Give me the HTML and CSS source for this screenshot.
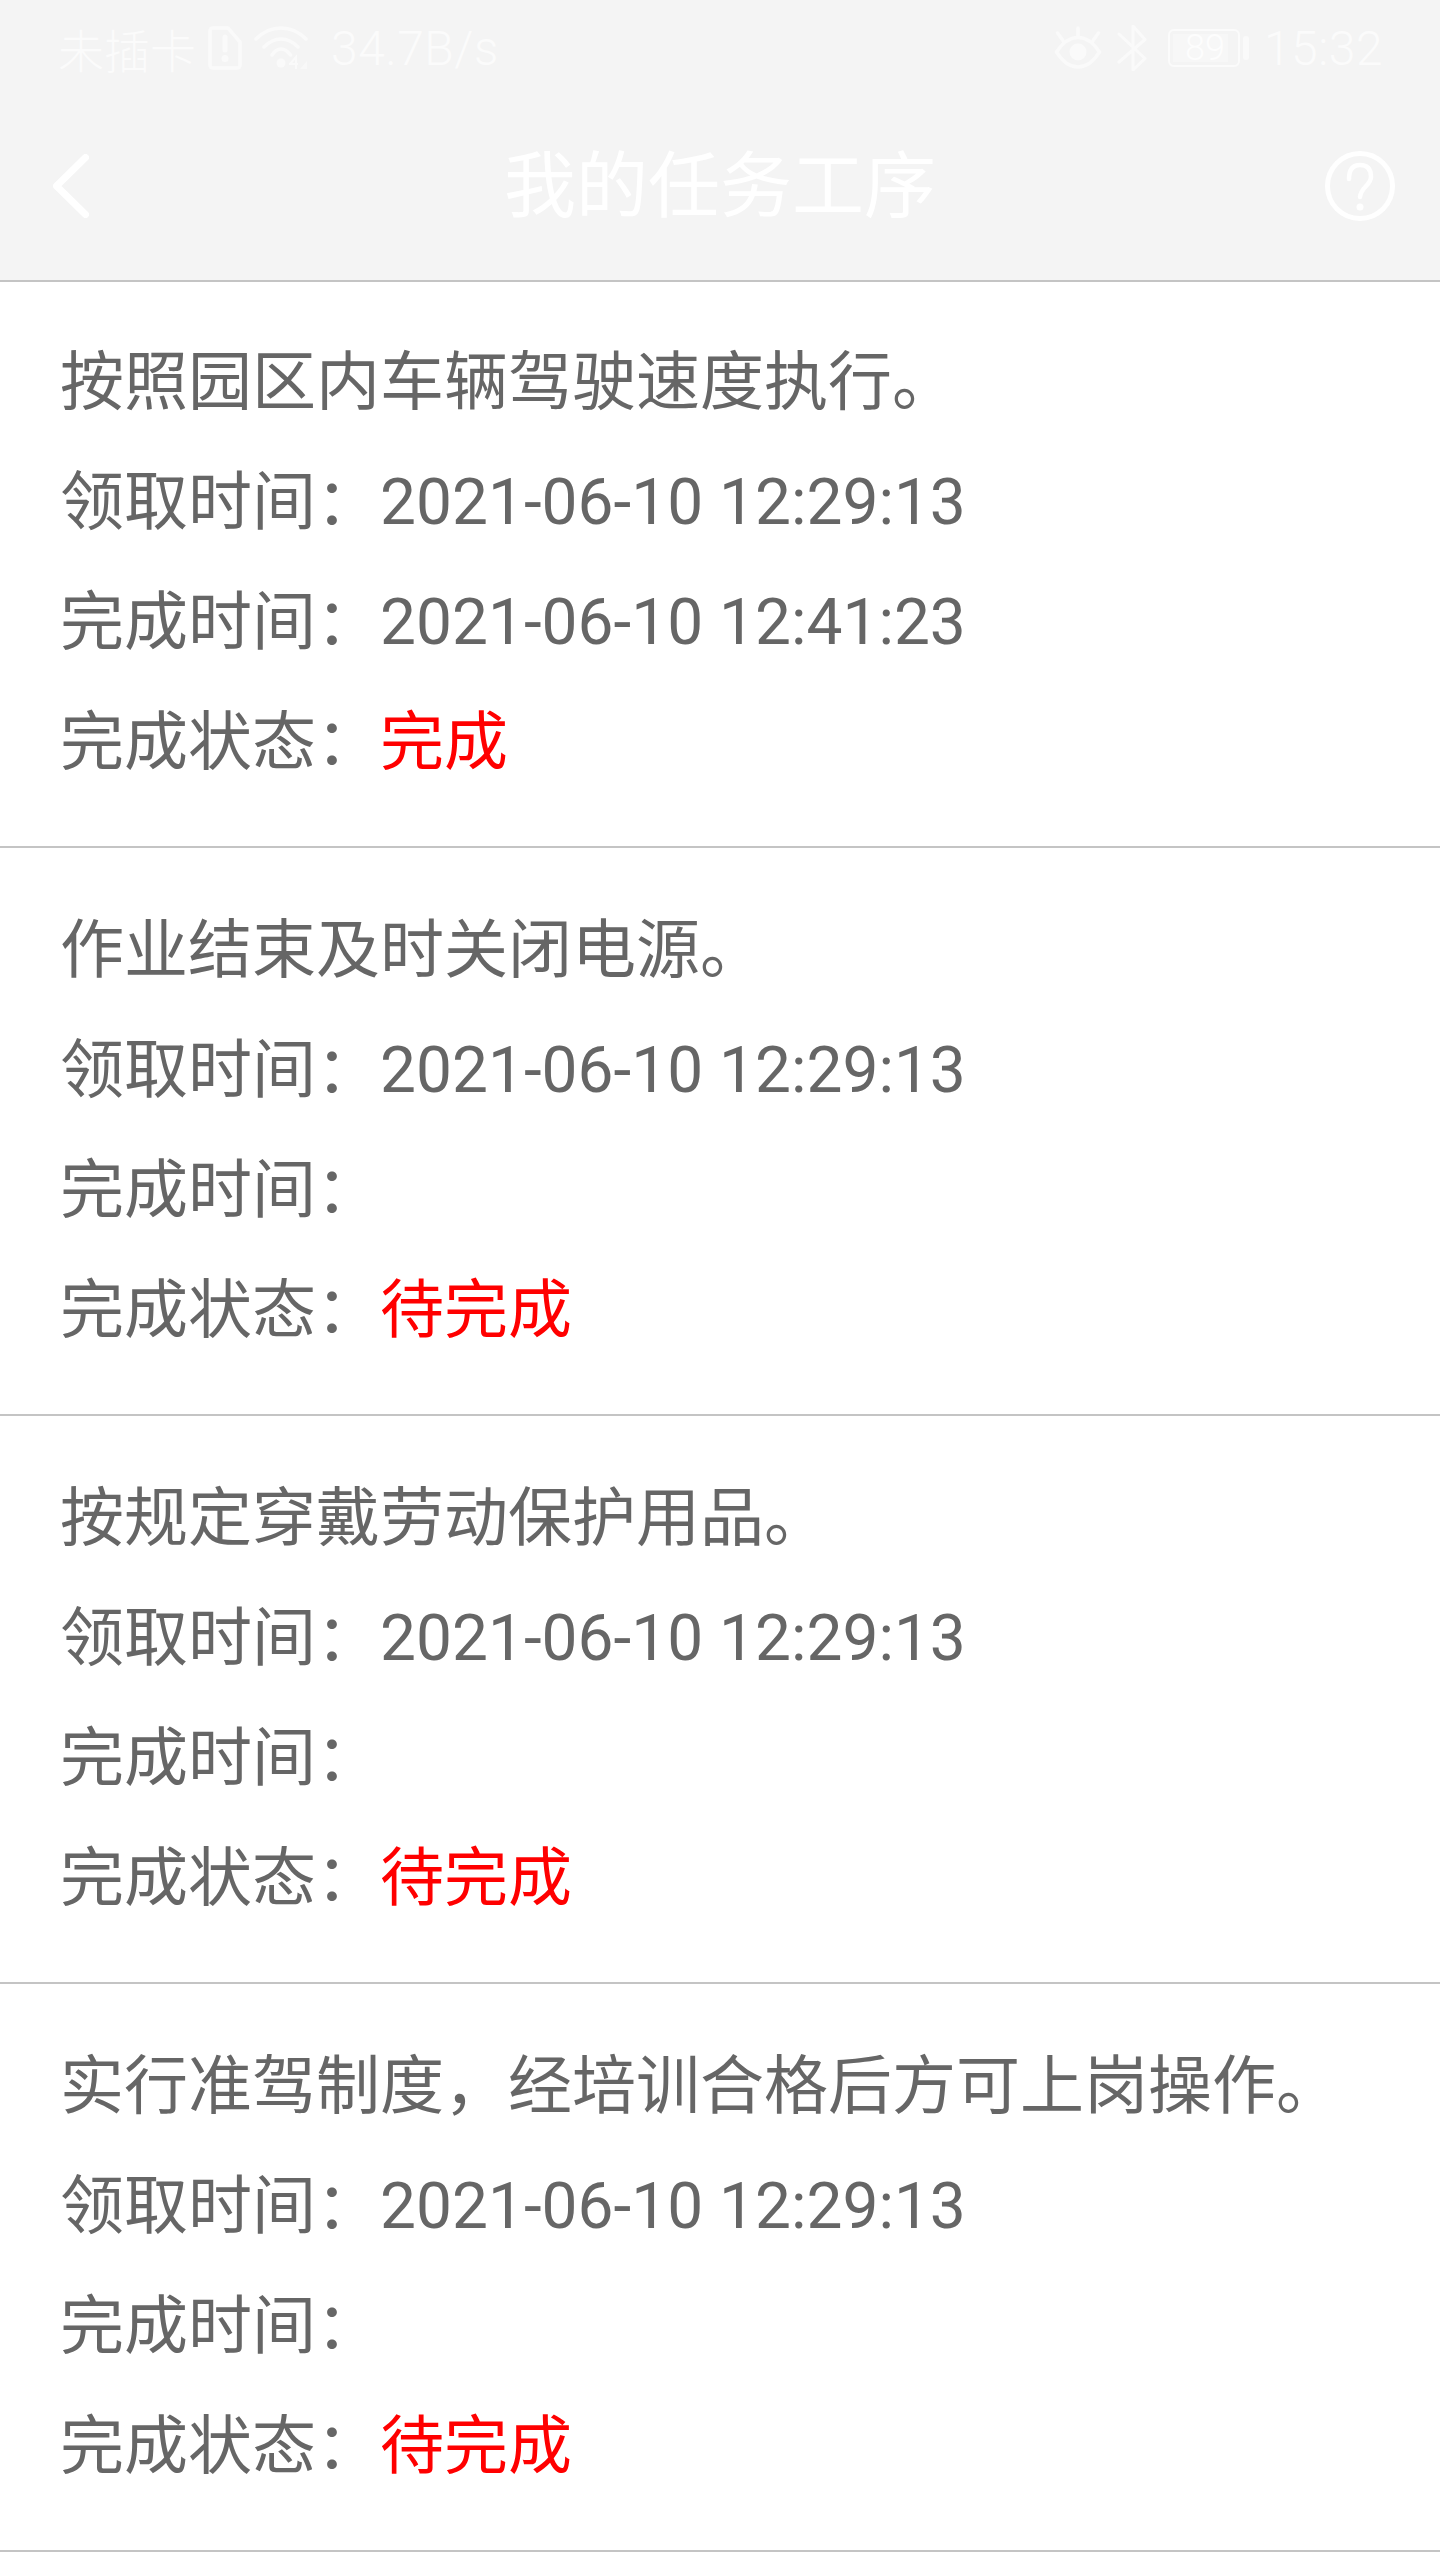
FILE: index.html
```html
<!DOCTYPE html>
<html lang="zh-CN">
<head>
    <meta charset="UTF-8">
    <meta name="viewport" content="width=device-width, initial-scale=1.0">
    <title>我的任务工序</title>
    <link rel="stylesheet" href="styles.css">
</head>
<body>
    <header class="top">
        <div class="status-bar">
            <div class="status-left">
                <span class="carrier">未插卡</span>
                <svg class="icon-sim" viewBox="0 0 34 44" width="34" height="44">
                    <path d="M5 2H20L32 16V39Q32 42 29 42H5Q2 42 2 39V5Q2 2 5 2Z" fill="none" stroke="#fafafa" stroke-width="3.5" stroke-linejoin="round"/>
                    <path d="M17 11V24" stroke="#fafafa" stroke-width="5" stroke-linecap="round"/>
                    <circle cx="17" cy="32.5" r="3.5" fill="#fafafa"/>
                </svg>
                <svg class="icon-wifi" viewBox="0 0 54 44" width="54" height="44">
                    <path d="M2 13Q13 2 27 2T52 13M10 21Q18 13 27 13T44 21M18 29Q22 23 27 23T36.5 29" fill="none" stroke="#fafafa" stroke-width="3.5" stroke-linecap="round"/>
                    <circle cx="27" cy="37" r="4.5" fill="#fafafa"/>
                    <path d="M36 38L42 31V43M35 38H44" fill="none" stroke="#fafafa" stroke-width="2"/>
                    <path d="M46 43L53 35V43Z" fill="#f8f8f8"/>
                </svg>
                <span class="speed">34.7B/s</span>
            </div>
            <div class="status-right">
                <svg class="icon-eye" viewBox="0 0 48 44" width="48" height="44">
                    <path d="M2.5 26Q12 11.5 24 11.5T45.5 26Q36 41 24 41T2.5 26Z" fill="none" stroke="#fafafa" stroke-width="3.5" stroke-linejoin="round"/>
                    <circle cx="24" cy="26" r="8.5" fill="#fafafa"/>
                    <path d="M24 2V10M3.5 7L10 16M44.5 7L38 16" stroke="#fafafa" stroke-width="3.5" stroke-linecap="round"/>
                </svg>
                <svg class="icon-bt" viewBox="0 0 30 46" width="30" height="46">
                    <path d="M2 9L28 33.5L16 45V1L28 14.5L2 37" fill="none" stroke="#fafafa" stroke-width="3" stroke-linecap="round" stroke-linejoin="round"/>
                </svg>
                <div class="battery">
                    <span class="battery-level">89</span>
                </div>
                <span class="battery-nub"></span>
                <span class="clock">15:32</span>
            </div>
        </div>
        <nav class="nav-bar">
            <svg class="icon-back" viewBox="0 0 36 64" width="36" height="64">
                <path d="M32.5 3.5L3.5 32L32.5 60.5" fill="none" stroke="#fff" stroke-width="7" stroke-linecap="round" stroke-linejoin="round"/>
            </svg>
            <h1 class="nav-title">我的任务工序</h1>
            <svg class="icon-help" viewBox="0 0 70 70" width="70" height="70">
                <circle cx="35" cy="35" r="32.5" fill="none" stroke="#fff" stroke-width="5"/>
                <path d="M24 28Q24 14 35 14T46 26C46 34 36 36 35 46" fill="none" stroke="#fff" stroke-width="4.5" stroke-linecap="round"/>
                <circle cx="35" cy="56" r="3.5" fill="#fff"/>
            </svg>
        </nav>
    </header>

    <main class="task-list">
        <section class="task">
            <p class="row">按照园区内车辆驾驶速度执行。</p>
            <p class="row"><span class="label">领取时间：</span>2021-06-10 12:29:13</p>
            <p class="row"><span class="label">完成时间：</span>2021-06-10 12:41:23</p>
            <p class="row"><span class="label">完成状态：</span><span class="state">完成</span></p>
        </section>
        <section class="task">
            <p class="row">作业结束及时关闭电源。</p>
            <p class="row"><span class="label">领取时间：</span>2021-06-10 12:29:13</p>
            <p class="row"><span class="label">完成时间：</span></p>
            <p class="row"><span class="label">完成状态：</span><span class="state">待完成</span></p>
        </section>
        <section class="task">
            <p class="row">按规定穿戴劳动保护用品。</p>
            <p class="row"><span class="label">领取时间：</span>2021-06-10 12:29:13</p>
            <p class="row"><span class="label">完成时间：</span></p>
            <p class="row"><span class="label">完成状态：</span><span class="state">待完成</span></p>
        </section>
        <section class="task">
            <p class="row">实行准驾制度，经培训合格后方可上岗操作。</p>
            <p class="row"><span class="label">领取时间：</span>2021-06-10 12:29:13</p>
            <p class="row"><span class="label">完成时间：</span></p>
            <p class="row"><span class="label">完成状态：</span><span class="state">待完成</span></p>
        </section>
    </main>
</body>
</html>
```

FILE: styles.css
```css
* {
    margin: 0;
    padding: 0;
    box-sizing: border-box;
    font-family: Roboto, 'Noto Sans CJK SC', sans-serif;
}

body {
    background: #fff;
    width: 1440px;
    height: 2560px;
    overflow: hidden;
}

svg {
    display: block;
    flex: none;
}

.top {
    background: #f4f4f4;
    height: 282px;
    border-bottom: 2px solid #c4c4c4;
}

.status-bar {
    height: 100px;
    display: flex;
    justify-content: space-between;
    align-items: center;
    padding: 0 57px 4px 58px;
    color: #fbfbfb;
}

.status-left,
.status-right {
    display: flex;
    align-items: center;
}

.carrier {
    font-size: 46px;
    font-weight: 300;
}

.icon-sim {
    margin-left: 12px;
}

.icon-wifi {
    margin-left: 12px;
}

.speed {
    font-size: 48px;
    font-weight: 300;
    letter-spacing: 0.5px;
    margin-left: 23px;
}

.icon-bt {
    margin-left: 15px;
}

.battery {
    width: 72px;
    height: 38px;
    margin-left: 21px;
    padding: 3px;
    border: 2px solid #fbfbfb;
    border-radius: 6px;
    display: flex;
}

.battery-level {
    width: 55px;
    padding-right: 3px;
    background: #f7f7f7;
    color: #fdfdfd;
    text-align: right;
    font-size: 36px;
    font-weight: 300;
    line-height: 28px;
}

.battery-nub {
    width: 6px;
    height: 24px;
    margin-left: 3px;
    background: #fafafa;
    border-radius: 3px;
}

.clock {
    font-size: 48px;
    font-weight: 300;
    letter-spacing: 0.5px;
    margin-left: 15px;
}

.nav-bar {
    height: 172px;
    display: grid;
    grid-template-columns: 1fr auto 1fr;
    align-items: center;
    padding: 0 45px;
}

.icon-back {
    margin-left: 8px;
}

.icon-help {
    justify-self: end;
}

.nav-title {
    font-size: 72px;
    font-weight: 400;
    color: #fff;
    margin-bottom: 14px;
}

.task-list {
    margin-top: -2px;
}

.task {
    height: 568px;
    padding: 43px 60px 0;
    border-bottom: 2px solid #c4c4c4;
}

.row {
    height: 120px;
    line-height: 120px;
    font-size: 64px;
    color: #666;
    white-space: nowrap;
}

.label {
    display: inline-block;
    width: 320px;
}

.state {
    color: #f00;
}
```
